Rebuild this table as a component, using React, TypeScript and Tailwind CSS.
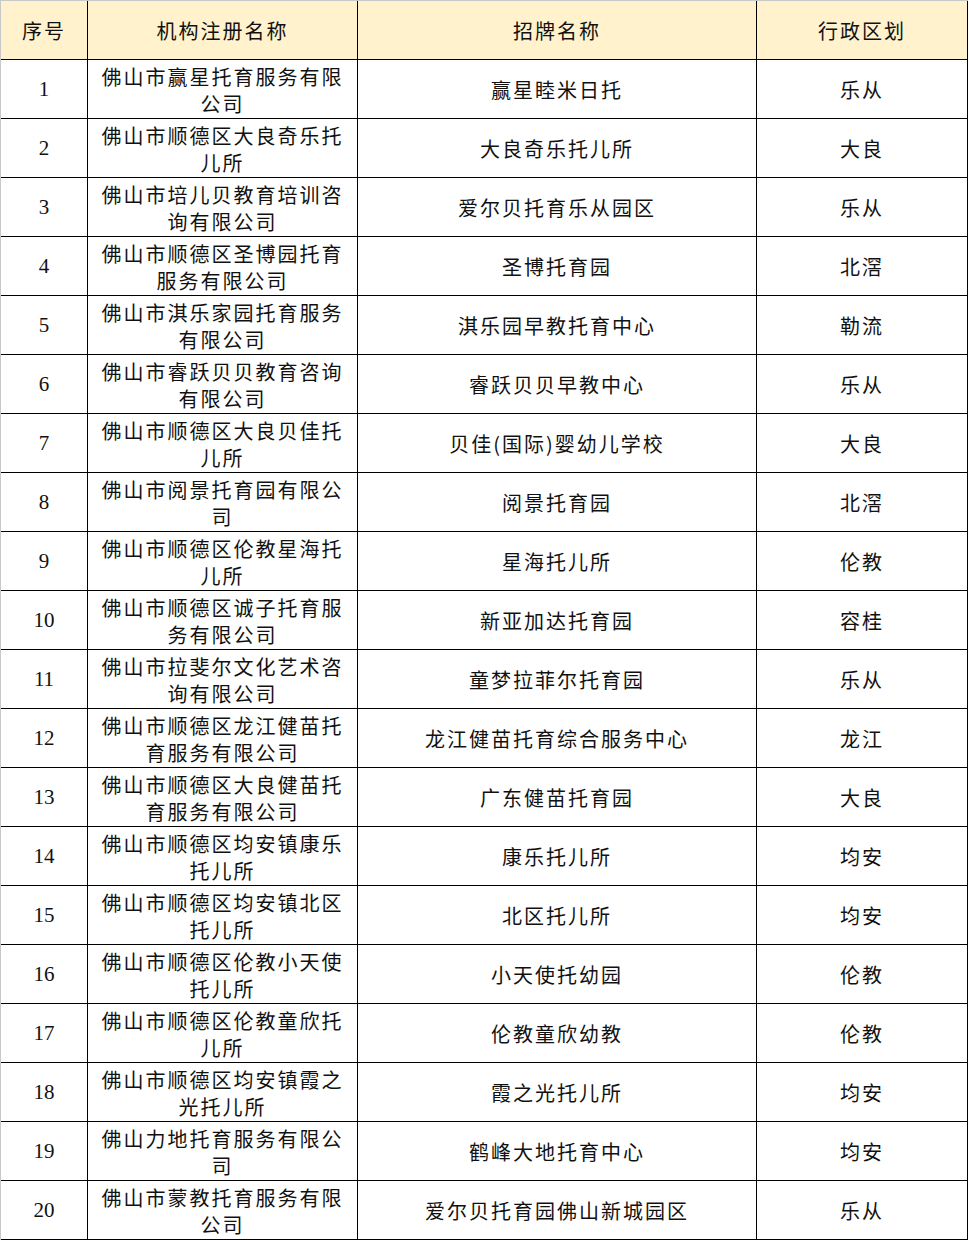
const rows: [string, string, string][] = [
  ["佛山市赢星托育服务有限公司", "赢星睦米日托", "乐从"],
  ["佛山市顺德区大良奇乐托儿所", "大良奇乐托儿所", "大良"],
  ["佛山市培儿贝教育培训咨询有限公司", "爱尔贝托育乐从园区", "乐从"],
  ["佛山市顺德区圣博园托育服务有限公司", "圣博托育园", "北滘"],
  ["佛山市淇乐家园托育服务有限公司", "淇乐园早教托育中心", "勒流"],
  ["佛山市睿跃贝贝教育咨询有限公司", "睿跃贝贝早教中心", "乐从"],
  ["佛山市顺德区大良贝佳托儿所", "贝佳(国际)婴幼儿学校", "大良"],
  ["佛山市阅景托育园有限公司", "阅景托育园", "北滘"],
  ["佛山市顺德区伦教星海托儿所", "星海托儿所", "伦教"],
  ["佛山市顺德区诚子托育服务有限公司", "新亚加达托育园", "容桂"],
  ["佛山市拉斐尔文化艺术咨询有限公司", "童梦拉菲尔托育园", "乐从"],
  ["佛山市顺德区龙江健苗托育服务有限公司", "龙江健苗托育综合服务中心", "龙江"],
  ["佛山市顺德区大良健苗托育服务有限公司", "广东健苗托育园", "大良"],
  ["佛山市顺德区均安镇康乐托儿所", "康乐托儿所", "均安"],
  ["佛山市顺德区均安镇北区托儿所", "北区托儿所", "均安"],
  ["佛山市顺德区伦教小天使托儿所", "小天使托幼园", "伦教"],
  ["佛山市顺德区伦教童欣托儿所", "伦教童欣幼教", "伦教"],
  ["佛山市顺德区均安镇霞之光托儿所", "霞之光托儿所", "均安"],
  ["佛山力地托育服务有限公司", "鹤峰大地托育中心", "均安"],
  ["佛山市蒙教托育服务有限公司", "爱尔贝托育园佛山新城园区", "乐从"],
];

const cell =
  "flex items-center justify-center border-r border-b border-black pt-[2px] text-center";

export default function App() {
  return (
    <div className="min-h-[1240px] bg-white">
      <div
        className="w-[968px] border-t border-l border-[#c8c8c8] text-[20px] text-[#111] tracking-[2px]"
        style={{ fontFamily: '"Noto Sans CJK SC", "Liberation Serif", serif' }}
      >
        <div className="grid h-[59px] grid-cols-[87px_270px_399px_211px] bg-[#fff2cc]">
          <div className={cell}>序号</div>
          <div className={cell}>机构注册名称</div>
          <div className={cell}>招牌名称</div>
          <div className={cell}>行政区划</div>
        </div>
        {rows.map(([name, sign, area], i) => (
          <div key={i} className="grid h-[59px] grid-cols-[87px_270px_399px_211px]">
            <div
              className={cell + " text-[21px] tracking-normal"}
              style={{ fontFamily: '"Liberation Serif", serif' }}
            >
              {i + 1}
            </div>
            <div className={cell + " flex-col leading-[27px]"}>
              <span>{name.slice(0, 11)}</span>
              <span>{name.slice(11)}</span>
            </div>
            <div className={cell}>{sign}</div>
            <div className={cell}>{area}</div>
          </div>
        ))}
      </div>
    </div>
  );
}
